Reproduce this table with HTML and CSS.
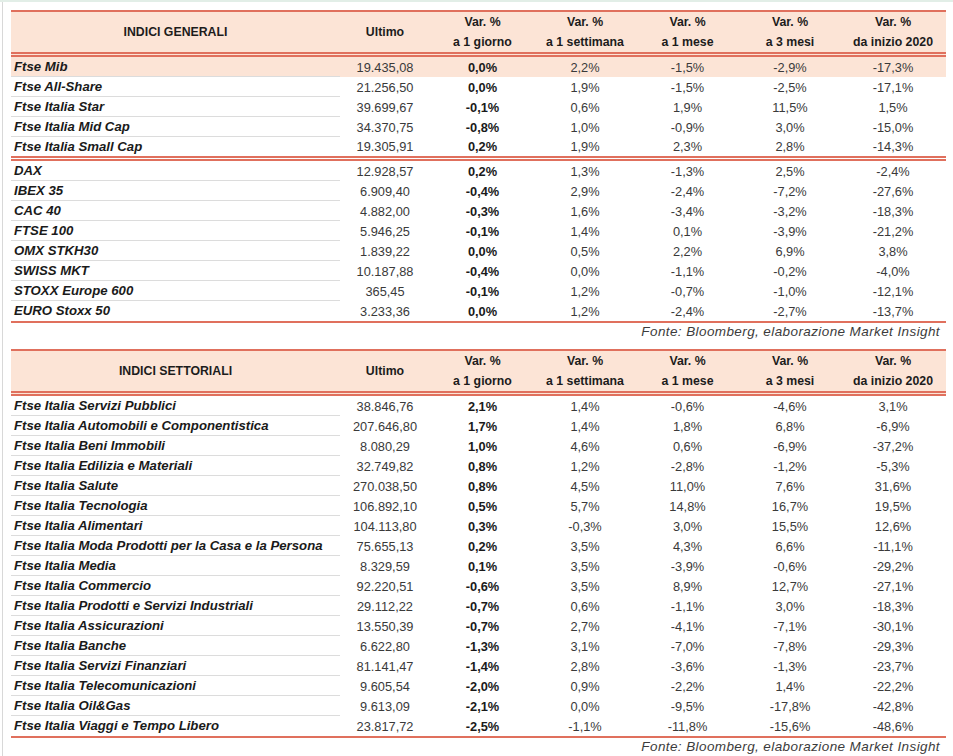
FILE: index.html
```html
<!DOCTYPE html>
<html lang="it">
<head>
<meta charset="utf-8">
<title>Indici</title>
<link rel="stylesheet" href="styles.css">
</head>
<body>
<div class="page">
<table class="grid">
<colgroup><col class="c-name"><col class="c-last"><col class="c-d"><col class="c-w"><col class="c-m"><col class="c-3m"><col class="c-y"></colgroup>
<thead>
<tr class="h1"><th rowspan="2" class="h-name">INDICI GENERALI</th><th rowspan="2">Ultimo</th><th>Var. %</th><th>Var. %</th><th>Var. %</th><th>Var. %</th><th>Var. %</th></tr>
<tr class="h2"><th>a 1 giorno</th><th>a 1 settimana</th><th>a 1 mese</th><th>a 3 mesi</th><th>da inizio 2020</th></tr>
</thead>
<tbody>
<tr class="hl"><td class="n">Ftse Mib</td><td>19.435,08</td><td class="b">0,0%</td><td>2,2%</td><td>-1,5%</td><td>-2,9%</td><td>-17,3%</td></tr>
<tr><td class="n">Ftse All-Share</td><td>21.256,50</td><td class="b">0,0%</td><td>1,9%</td><td>-1,5%</td><td>-2,5%</td><td>-17,1%</td></tr>
<tr><td class="n">Ftse Italia Star</td><td>39.699,67</td><td class="b">-0,1%</td><td>0,6%</td><td>1,9%</td><td>11,5%</td><td>1,5%</td></tr>
<tr><td class="n">Ftse Italia Mid Cap</td><td>34.370,75</td><td class="b">-0,8%</td><td>1,0%</td><td>-0,9%</td><td>3,0%</td><td>-15,0%</td></tr>
<tr class="gend"><td class="n">Ftse Italia Small Cap</td><td>19.305,91</td><td class="b">0,2%</td><td>1,9%</td><td>2,3%</td><td>2,8%</td><td>-14,3%</td></tr>
<tr><td class="n">DAX</td><td>12.928,57</td><td class="b">0,2%</td><td>1,3%</td><td>-1,3%</td><td>2,5%</td><td>-2,4%</td></tr>
<tr><td class="n">IBEX 35</td><td>6.909,40</td><td class="b">-0,4%</td><td>2,9%</td><td>-2,4%</td><td>-7,2%</td><td>-27,6%</td></tr>
<tr><td class="n">CAC 40</td><td>4.882,00</td><td class="b">-0,3%</td><td>1,6%</td><td>-3,4%</td><td>-3,2%</td><td>-18,3%</td></tr>
<tr><td class="n">FTSE 100</td><td>5.946,25</td><td class="b">-0,1%</td><td>1,4%</td><td>0,1%</td><td>-3,9%</td><td>-21,2%</td></tr>
<tr><td class="n">OMX STKH30</td><td>1.839,22</td><td class="b">0,0%</td><td>0,5%</td><td>2,2%</td><td>6,9%</td><td>3,8%</td></tr>
<tr><td class="n">SWISS MKT</td><td>10.187,88</td><td class="b">-0,4%</td><td>0,0%</td><td>-1,1%</td><td>-0,2%</td><td>-4,0%</td></tr>
<tr><td class="n">STOXX Europe 600</td><td>365,45</td><td class="b">-0,1%</td><td>1,2%</td><td>-0,7%</td><td>-1,0%</td><td>-12,1%</td></tr>
<tr class="last"><td class="n">EURO Stoxx 50</td><td>3.233,36</td><td class="b">0,0%</td><td>1,2%</td><td>-2,4%</td><td>-2,7%</td><td>-13,7%</td></tr>
</tbody>
</table>
<p class="source">Fonte: Bloomberg, elaborazione Market Insight</p>

<table class="grid">
<colgroup><col class="c-name"><col class="c-last"><col class="c-d"><col class="c-w"><col class="c-m"><col class="c-3m"><col class="c-y"></colgroup>
<thead>
<tr class="h1"><th rowspan="2" class="h-name">INDICI SETTORIALI</th><th rowspan="2">Ultimo</th><th>Var. %</th><th>Var. %</th><th>Var. %</th><th>Var. %</th><th>Var. %</th></tr>
<tr class="h2"><th>a 1 giorno</th><th>a 1 settimana</th><th>a 1 mese</th><th>a 3 mesi</th><th>da inizio 2020</th></tr>
</thead>
<tbody>
<tr><td class="n">Ftse Italia Servizi Pubblici</td><td>38.846,76</td><td class="b">2,1%</td><td>1,4%</td><td>-0,6%</td><td>-4,6%</td><td>3,1%</td></tr>
<tr><td class="n">Ftse Italia Automobili e Componentistica</td><td>207.646,80</td><td class="b">1,7%</td><td>1,4%</td><td>1,8%</td><td>6,8%</td><td>-6,9%</td></tr>
<tr><td class="n">Ftse Italia Beni Immobili</td><td>8.080,29</td><td class="b">1,0%</td><td>4,6%</td><td>0,6%</td><td>-6,9%</td><td>-37,2%</td></tr>
<tr><td class="n">Ftse Italia Edilizia e Materiali</td><td>32.749,82</td><td class="b">0,8%</td><td>1,2%</td><td>-2,8%</td><td>-1,2%</td><td>-5,3%</td></tr>
<tr><td class="n">Ftse Italia Salute</td><td>270.038,50</td><td class="b">0,8%</td><td>4,5%</td><td>11,0%</td><td>7,6%</td><td>31,6%</td></tr>
<tr><td class="n">Ftse Italia Tecnologia</td><td>106.892,10</td><td class="b">0,5%</td><td>5,7%</td><td>14,8%</td><td>16,7%</td><td>19,5%</td></tr>
<tr><td class="n">Ftse Italia Alimentari</td><td>104.113,80</td><td class="b">0,3%</td><td>-0,3%</td><td>3,0%</td><td>15,5%</td><td>12,6%</td></tr>
<tr><td class="n">Ftse Italia Moda Prodotti per la Casa e la Persona</td><td>75.655,13</td><td class="b">0,2%</td><td>3,5%</td><td>4,3%</td><td>6,6%</td><td>-11,1%</td></tr>
<tr><td class="n">Ftse Italia Media</td><td>8.329,59</td><td class="b">0,1%</td><td>3,5%</td><td>-3,9%</td><td>-0,6%</td><td>-29,2%</td></tr>
<tr><td class="n">Ftse Italia Commercio</td><td>92.220,51</td><td class="b">-0,6%</td><td>3,5%</td><td>8,9%</td><td>12,7%</td><td>-27,1%</td></tr>
<tr><td class="n">Ftse Italia Prodotti e Servizi Industriali</td><td>29.112,22</td><td class="b">-0,7%</td><td>0,6%</td><td>-1,1%</td><td>3,0%</td><td>-18,3%</td></tr>
<tr><td class="n">Ftse Italia Assicurazioni</td><td>13.550,39</td><td class="b">-0,7%</td><td>2,7%</td><td>-4,1%</td><td>-7,1%</td><td>-30,1%</td></tr>
<tr><td class="n">Ftse Italia Banche</td><td>6.622,80</td><td class="b">-1,3%</td><td>3,1%</td><td>-7,0%</td><td>-7,8%</td><td>-29,3%</td></tr>
<tr><td class="n">Ftse Italia Servizi Finanziari</td><td>81.141,47</td><td class="b">-1,4%</td><td>2,8%</td><td>-3,6%</td><td>-1,3%</td><td>-23,7%</td></tr>
<tr><td class="n">Ftse Italia Telecomunicazioni</td><td>9.605,54</td><td class="b">-2,0%</td><td>0,9%</td><td>-2,2%</td><td>1,4%</td><td>-22,2%</td></tr>
<tr><td class="n">Ftse Italia Oil&amp;Gas</td><td>9.613,09</td><td class="b">-2,1%</td><td>0,0%</td><td>-9,5%</td><td>-17,8%</td><td>-42,8%</td></tr>
<tr class="last"><td class="n">Ftse Italia Viaggi e Tempo Libero</td><td>23.817,72</td><td class="b">-2,5%</td><td>-1,1%</td><td>-11,8%</td><td>-15,6%</td><td>-48,6%</td></tr>
</tbody>
</table>
<p class="source">Fonte: Bloomberg, elaborazione Market Insight</p>
</div>
</body>
</html>
```

FILE: styles.css
```css
html, body {
  margin: 0;
  padding: 0;
  background: #ffffff;
}
body {
  border-top: 2px solid #e2eee7;
  font-family: "Liberation Sans", Arial, sans-serif;
  color: #2b2b2b;
}
.page {
  margin-left: 2px;
  border-left: 1px solid #d8d8d8;
  padding: 8px 0 0 8px;
  min-height: 754px;
  box-sizing: border-box;
}
.grid {
  border-collapse: separate;
  border-spacing: 0;
  table-layout: fixed;
  width: 935px;
  border-top: 2px solid #e0705d;
  border-bottom: 2px solid #e0705d;
}
.c-name { width: 329px; }
.c-last { width: 90px; }
.c-d { width: 105px; }
.c-w { width: 100px; }
.c-m { width: 105px; }
.c-3m { width: 100px; }
.c-y { width: 106px; }

.grid th {
  background: #fce4d6;
  font-weight: bold;
  font-size: 12.3px;
  padding: 0;
  text-align: center;
  color: #1c1c1c;
  white-space: nowrap;
}
.grid .h1 th {
  line-height: 21px;
  height: 21px;
}
.grid .h2 th {
  line-height: 19px;
  height: 19px;
  vertical-align: bottom;
}
.grid .h1 th[rowspan] {
  vertical-align: middle;
}
.grid th[rowspan],
.grid .h2 th {
  border-bottom: 5px double #e0705d;
}
.grid td {
  padding: 0;
  line-height: 19px;
  font-size: 12.8px;
  text-align: center;
  color: #3a3a3a;
  white-space: nowrap;
  vertical-align: middle;
}
.grid td.n {
  text-align: left;
  padding-left: 3px;
  font-weight: bold;
  font-style: italic;
  font-size: 13.2px;
  color: #1a1a1a;
  border-bottom: 1px solid #dcdcdc;
}
.grid td.b {
  font-weight: bold;
  color: #1a1a1a;
}
.grid tr.hl td {
  background: #fce4d6;
}
.grid tr.gend td,
.grid tr.gend td.n {
  border-bottom: 5px double #e0705d;
}
.grid tr.last td.n {
  border-bottom: 1px solid #ffffff;
}
.source {
  margin: 0 0 9px 0;
  width: 929px;
  text-align: right;
  font-style: italic;
  font-size: 13.5px;
  letter-spacing: 0.4px;
  line-height: 17px;
  color: #3c3c3c;
}
```
